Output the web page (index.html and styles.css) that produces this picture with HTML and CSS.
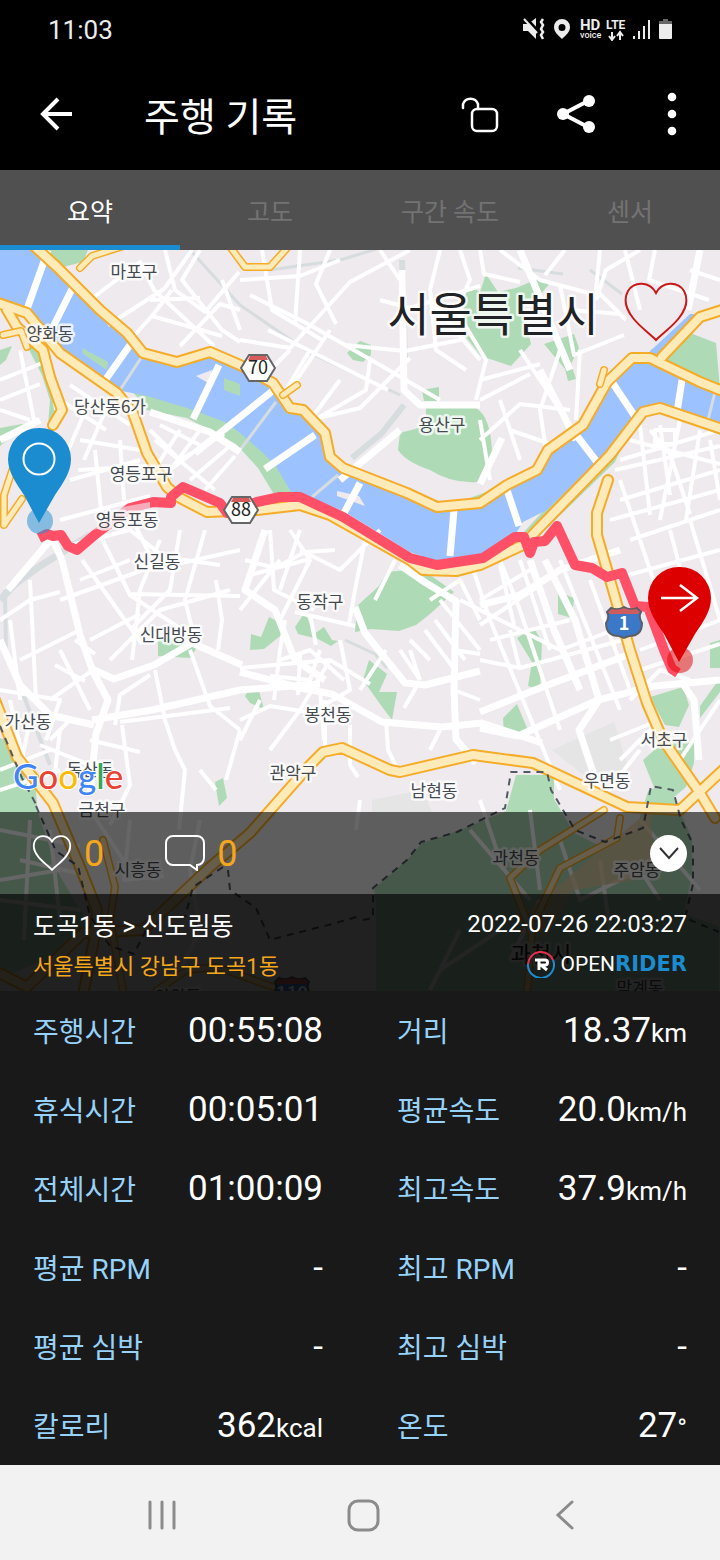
FILE: index.html
```html
<!DOCTYPE html>
<html lang="ko">
<head>
  <meta charset="UTF-8">
  <meta name="viewport" content="width=device-width, initial-scale=1.0">
  <title>주행 기록</title>
  <link rel="stylesheet" href="styles.css">
</head>
<body>
  <div class="status-bar">
    <span class="clock">11:03</span>
    <svg class="status-icons" width="152" height="24" viewBox="522 17 152 24" aria-hidden="true">
      <g fill="#ececec">
        <path d="M523 24h5l8-6v21l-8-8h-5z"/>
        <path d="M562 19a8 8 0 0 0-8 8c0 5 4 8 8 12c4-4 8-7 8-12a8 8 0 0 0-8-8zm0 5a3 3 0 1 1 0 7a3 3 0 0 1 0-7z"/>
        <path d="M633 36h2v3h-2zM638 31h2v8h-2zM643 26h2v13h-2zM648 20h2v19h-2z"/>
        <path d="M659 24h13v14a1 1 0 0 1-1 1h-11a1 1 0 0 1-1-1z"/>
      </g>
      <path d="M663 19h5v2h4v3h-13v-3h4z" fill="#666"/>
      <path d="M526 18l12 13" stroke="#000" stroke-width="3"/>
      <path d="M524 19l13 14" stroke="#ececec" stroke-width="2"/>
      <path d="M543 19l-2 3l2 3l-2 4l2 3l-2 3l2 4" fill="none" stroke="#ececec" stroke-width="2.5"/>
      <path d="M612 32v8m-3-4l3 4l3-4M620 40v-8m-3 4l3-4l3 4" fill="none" stroke="#ececec" stroke-width="2"/>
      <text x="580" y="30" class="st-big">HD</text>
      <text x="580" y="38" class="st-small">voice</text>
      <text x="606" y="29" class="st-lte">LTE</text>
    </svg>
  </div>

  <header class="app-bar">
    <button class="back" aria-label="뒤로">
      <svg width="34" height="34" viewBox="0 0 34 34" fill="none" stroke="#fff" stroke-width="4"><path d="M33 17H4M19 2L4 17l15 15"/></svg>
    </button>
    <h1>주행 기록</h1>
    <button class="tool" aria-label="잠금">
      <svg width="38" height="40" viewBox="461 95 38 40" fill="none" stroke="#fff" stroke-width="2.5"><path d="M463 109v-4a8 8 0 0 1 15 0v5" stroke-linecap="round"/><rect x="472" y="110" width="25" height="22" rx="5"/></svg>
    </button>
    <button class="tool" aria-label="공유">
      <svg width="40" height="40" viewBox="556 94 40 40" fill="#fff"><path d="M588 101l-25 13l25 13" fill="none" stroke="#fff" stroke-width="4"/><circle cx="589" cy="101" r="6"/><circle cx="563" cy="114" r="6"/><circle cx="589" cy="127" r="6"/></svg>
    </button>
    <button class="tool" aria-label="더보기">
      <svg width="10" height="44" viewBox="0 0 10 44" fill="#fff"><circle cx="5" cy="5" r="4.3"/><circle cx="5" cy="22" r="4.3"/><circle cx="5" cy="39" r="4.3"/></svg>
    </button>
  </header>

  <nav class="tabs" role="tablist">
    <button class="tab active" role="tab" aria-selected="true">요약</button>
    <button class="tab" role="tab">고도</button>
    <button class="tab" role="tab">구간 속도</button>
    <button class="tab" role="tab">센서</button>
  </nav>

  <section class="map">
    <svg class="map-canvas" viewBox="0 250 720 741" preserveAspectRatio="xMidYMid slice">
      <rect x="0" y="250" width="720" height="741" fill="#eeeaee"/>

      <!-- plain areas and rail -->
      <path fill="#e4e5e4" d="M552 750l62-28l16 52l-30 14zM372 800l50-10l10 22h-60z"/>
      <g class="rail">
        <path d="M0 600L14 585L40 566L90 535" stroke-width="7"/>
        <path d="M5 590L6 655M14 670l36 95" stroke-width="4"/>
        <path d="M190 250l50 55l70 48l90 42"/>
        <path d="M352 458l30-25l22-28M402 260l3 100" stroke-width="6"/>
        <path d="M270 270l70-10l40-12M590 270l32 24M518 268l45 6M345 640l30 14l12 14"/>
      </g>

      <!-- parks -->
      <g class="park">
        <path d="M18 250h70l-5 12l-24 6l-18-14z"/>
        <path d="M0 350l12-4l-6 14l-6 5zM0 428l22-4l12 6l-20 4l-14 12z"/>
        <path d="M347 353l13-12l11 4v10l-8 7l-10-2zM422 390l17-3v14h-15z"/>
        <path d="M400 433l26-7v-18q22-3 50 0q14 8 16 42q-2 26-14 32q-26 2-48-12q-24-8-32-20z"/>
        <path d="M463 292l8-5l9 5l6-18l12 18l18-4l12-5l10-4l12 4l-11 13l-18 8l10 40l-20 22l-30-10l-16-20z"/>
        <path d="M544 344l18-6l12-4l5 14l-8 16l5 15l-8 2l-3-12z"/>
        <path d="M357 606l22-20l8-14l32-3l14 8l21 15l-24 22l-14 11l-17 6l-28-2l-16 3z"/>
        <path d="M250 650l1-16l10 3l8-20l8 4l7 12l-20 16zM295 627l10-15l9 22l10-7l8 13l6 1l-7 5l-13-7l-20-5z"/>
        <path d="M245 696l4-6l10 1l5 18l-14-6zM363 680l6-20l18 14l-8 18l18 0l-5 28l-12-16z"/>
        <path d="M158 642l2-6l14 3l24 7l-8 12l-32-2zM215 782l8-4l4 20l-8 8z"/>
        <path d="M558 592l16 6l-2 20l-14-4zM517 638l17-10l8 14l-2 48l-12-4l4-24zM503 718l14-14l10 24l-5 7h-18z"/>
        <path d="M650 697l33-10l6 18l-10 22l-14-2zM700 718l20-26v-14l-20 28zM643 760l23-20l28 3v20l-8 24l-24 20zM710 643l10-3v28h-10z"/>
        <path d="M650 350l40-17l26 10l4 46l-30-12z"/>
        <path d="M0 738l14 5l20 30l4 40l20 60l30 50l-26 30l-62 25z"/>
        <path d="M376 991v-90l-2-12l34-30l14-16l36-12l48-20l10-36h38v24l20 34l28 14l34-16l12-40l20-10l12 30l12 28v35l-8 40l35 12v74z"/>
        <path d="M655 800l25 10l8 36l-34 14z"/>
      </g>

      <!-- river and its banks -->
      <path class="park" d="M133 392L190 402L245 425L275 460L300 500L275 496L258 468L236 444L187 418L147 410zM523 533L547 507L593 458L640 405L615 462L545 530zM25 330L45 360L53 400L56 420L48 426L50 400L42 375L24 340zM430 505L470 498L505 485L507 492L475 512L440 514z"/>
      <path class="water" d="M0 250H33L57 267L100 310L127 333L143 353L177 362L210 352L240 365L273 383L290 408L303 410L325 433L330 457L343 468L407 493L437 507L480 503L507 485L537 470L548 450L583 425L607 382L632 358L650 358L700 382L720 390V430L660 408L643 412L600 458L547 510L523 522L515 535L483 555L437 562L410 552L345 512L300 493L291 492L275 465L262 452L240 433L225 422L187 408L147 396L117 390L60 350L27 310L0 302z"/>
      <path class="water" d="M645 356L690 314L702 314L665 360z"/>
      <path class="park" d="M82 348l26 14l-1 8l-24-16zM224 378l16 6v12l-16-6z"/>
      <path fill="#eeeaee" d="M196 376l16-6l-2 14zM337 491l22 5l6 10l-28-10z"/>
      <path class="rail" d="M141 358L120 390M276 402L240 450M338 475L312 497M715 392L708 420"/>

      <!-- streets -->
      <g class="street wide">
        <path d="M48 250l-22 62M74 285l-21 42M130 345l-24 34M219 365l-26 54M280 385l-50 40l-35 28M315 435l-50 34M360 483l-17 32M454 510l-4 46M612 382l24 36M577 436l20 26M507 490l12 36M682 380l-5 32M700 250l-12 60"/>
        <path d="M62 560l18 75l12 34l22 10l40-14l38-22l50 22M62 560l-10-22l-44 52M92 670l16 30l-12 34l-6 60M92 720l60-10l88-20l80-6"/>
        <path d="M0 640l20 45l30 30l44 10M240 672l60 16l32 6l50 28l60 5l40-4l60 20M400 565l26 18l30 18l-2 90l2 48l20 24"/>
        <path d="M355 607l10 26l40 50l20 2l55-14M520 250l50 120M402 270l2 120l16 15l60 0M400 430l-60 50M265 530l-20 60l30 20l20 50l30 20"/>
        <path d="M480 605l40-10l40-25l60-20M480 712l60-24l90-34M480 728l38 8l80-36l56-14l66-6M530 560l24 70l26 60M545 560l30 60l24 80l-20 30l20 60"/>
        <path d="M540 370l26 50l10 20M480 484l22-46M0 440l40-20M150 412l60 20l30 20M680 680l14 20l5 60"/>
      </g>
      <g class="street">
        <!-- north west -->
        <path d="M90 300l50-38l14 28l60 56M108 325l56-36l28-39M130 340l22-24l70 20M165 250l10 40l30 22l34-40M152 316l20-26M180 346l40-42l20 6M200 250l-18 30l40 50l18 12M150 300l50-2M222 280l18 50"/>
        <path d="M250 295l60 30l70 40l60 35M240 340l50 8l60-66l60-32M262 250l10 60l50 30M300 250l-5 74M330 250l-14 34l20 40M240 280l60-4l40-16M268 330l80 40l40 20M290 350l-30 30M330 330l-40 60M310 350l-30 50M340 380l-30 40l50-12l50-50M370 360l-4 30l-48 28M345 345l60 6l60-12M380 300l30 8l70-22"/>
        <path d="M380 250l20 30M440 250l-10 40l6 60l30 20M460 250l10 30l-14 30l30 50l-10 40M430 300l50 60M480 250l4 24l36 8M500 250l40 30l60 16M545 275l20-25M560 285l14 70l50-20M600 250l-4 40l30 30M625 250l15 60M640 250l-34 20l-10 30M655 250l-6 30l60 20M570 310l50 4M690 270l30 10"/>
        <!-- west -->
        <path d="M0 380l50-20l6 50M0 400l40-16M20 350l14 70M0 410l30 10M70 385l60 40M60 400l46 30M80 440l60 10M90 400l-26 60M110 400l-26 60M78 470l70-4M95 450l6 60M120 440l4 60M150 430l30 30l44-26M160 425l40 20M155 440l60 50M180 430l-26 40M200 430l-34 46M170 470l40-30M190 480l40-34M205 490l30-34M70 480l70-20M60 520l90-24"/>
        <path d="M70 545l60-15l50 40M100 535l30 60l60 40M130 515l20 40l70 10M160 540l-20 50l-8 70M180 530l-10 60l-40 40M205 530l-20 70l10 40M150 570l90-20M80 580l50-20M60 600l100-36M82 560l60 84M130 594l110 2M0 620l30-20l30-8M30 580l6 120M10 620l10 80M20 660l60-30M50 700l40-28M90 640l50-26M110 660l50-50l70-20M60 650l30 60M75 640l20 14M55 665l30 16M0 690l60 10l-14 40M216 580l6 40l-4 30M190 650l20 56l30 24"/>
        <path d="M115 725l5-30l30-20M120 722l110-14M155 670l10 50l10 30l10 20l-6 60M122 725l8 60l-20 40M90 740l50 12M40 745l60 24M30 720l-10 50M60 730l-6 50M0 770l50-20M0 790l60-20M200 770l16 20M240 730l-14 50M50 740l20-20M10 700l20 90"/>
        <!-- south -->
        <path d="M245 560l30 8l30-16l30-2M270 530l4 60l40 20M290 530l20 30l-20 40l-10 20M300 530l-20 60M240 610l40-50M250 575l60-16M300 550l40 20l40-40M365 540l-10 50l-6 34M395 560l-20 40M295 612l60 14M310 615l6 30M285 620l-5 30l-6 50M280 660l30-10l34 30M300 655l-2 40M320 650l-10 30l-40-4M340 640l10 50l-24 14M330 660l-30 50l-30 40M240 668l90-8l40 24M260 700l-20 40M240 720l30-14l50 8M360 690l26-40M320 690l4 50M350 725v40l8 12M386 720l2 30l10 20M325 700l0 50"/>
        <path d="M400 650l20 30M420 680l-10-30M425 630l30 40M410 640l20 20M435 620l30 40M418 684l-14 24M440 600l40 50M454 650l26 4M454 690l26 10M430 600l30-20l20 40M460 600l100 50M470 560l20 60l70 170M500 560l20 50l40 120M440 730l-10 20"/>
        <!-- south east -->
        <path d="M500 565l14 60M520 560l30 90M480 600l50-30M480 625l60-40M490 640l80-20M480 660l40 8l110-30M510 630l10 40M560 560l60 150M590 580l40 110M610 580l110-30M640 540l20 60M670 530l16 60M690 520l30 100M560 650l70-26M640 650l80-30M640 670l80-26M630 700l30-30l30 10M620 760l40-40M610 740l50-20M600 800l40-50M680 760l40-60"/>
        <!-- east -->
        <path d="M480 380l60-16M480 400l50-26M500 400l20 60M480 440l40-36l50 6M510 430l40 14M480 420l10 60M560 350l-20 60l6 40M520 350l40 60M580 350l-4 70M620 460l100-30M615 470l105-24M630 440l90 24M640 425l10 90M660 425l10 70M680 420l-20 100M700 430l-14 90M710 440l10 60M620 500l100-30M610 520l110-30M620 480l20 60M650 430l20 24l20 60M655 430h20v14h-20zM630 540l90-30"/>
        <path d="M0 830l80 16M20 860l70 16M0 880l60-10M30 820l-6 120M50 830l10 90M0 900l80 10M90 810l40 60M130 820l-6 60l40-4M200 820l-10 50l10 60l-20 40M360 800l-4 30M480 800l20 60M470 830l60 70M530 810l10 80M560 840l20 60l60-30l20 30M640 820l60 70M600 860l10 70M540 900l-30 60M460 930l-30 60M500 930l-60 40"/>
      </g>

      <path fill="#e9cfa4" opacity=".8" d="M650 810l4 50l-20 20l-60 10l-30 50l-15-30l60-50z"/>

      <!-- highways: casing, then fill -->
      <g class="casing">
        <path id="hw1" d="M33 245L57 267L100 310L127 333L143 353L177 362L210 352L240 365L273 383L290 408L303 410L325 433L330 457L343 468L407 493L437 507L480 503L507 485L537 470L548 450L583 425L607 382L632 358L650 358L700 382L725 392"/>
        <path id="hw2" d="M-5 302L27 313L60 353L117 393L133 413L147 453L167 487L180 498L207 512L257 510L300 505L330 515L410 560L423 570L457 571L480 565L523 545L540 527L610 455L643 412L660 408L725 430"/>
        <path id="hw3" d="M662 357L700 317L725 309"/>
        <path id="hw4" d="M608 480L597 513L597 535L613 590L630 650L647 703L663 740L700 793L715 818"/>
        <path id="hw5" d="M-5 971L27 987L83 933L143 930L210 867L250 833L310 765L323 752L342 748L390 770L400 772L473 755L533 763L627 807L680 810L725 768"/>
        <path id="hw6" d="M-5 700L17 757L53 803L80 867L97 910L95 935L83 995"/>
        <path id="hw7" d="M7 310L17 327L43 350L50 377L62 410L53 425"/>
      </g>
      <g class="fill">
        <use href="#hw1"/><use href="#hw2"/><use href="#hw3"/><use href="#hw4"/><use href="#hw5"/><use href="#hw6"/><use href="#hw7"/>
      </g>
      <g class="casing slim">
        <path id="r1" d="M80 268l12-12l38-12M225 240l20 27h25l18-20M600 384l4-14M283 395l14-10M14 465l-10 30v30l18-26M3 335l18-4l6 16"/>
        <path id="r2" d="M103 840L115 887L110 920L123 990M157 990L187 970L217 967L273 987"/>
        <path id="r3" d="M540 850l64-40M620 818l-3 20l-57 30l-24 50M540 850l-30 28l22 56l-5 60"/>
      </g>
      <g class="fill slim">
        <use href="#r1"/><use href="#r2"/><use href="#r3"/>
      </g>

      <path class="border-line" d="M0 726l22 52l16 30M36 806l20 45l22 15l12 50l20 30l24 8l12-24M223 867l-30 20l-8 30M228 870l2 20l26 18l14 32l22-6l40-10l28-8M363 920l10-2v-30l34-28l14-18l36-10l48-24l6-36h36l4 18l24 40l30 12l38-14l8-42l22 4l8 30l12 24v40l-8 34l34 14"/>

      <!-- recorded route -->
      <path class="route" d="M39 538L47 534L53 536L61 535L68 546L77 550L97 533L130 508L153 502L171 503L171 497L183 487L220 503L227 513L257 502L280 497L300 497L343 517L410 558L437 565L483 558L515 537L524 537L530 553L534 542L545 541L557 526L575 565L592 568L607 577L622 573L635 606L648 607L664 650L672 669L678 673"/>
      <path d="M86 532L96 512L150 502V528H100z" fill="#eeeaee" opacity=".6"/>

      <!-- road signs -->
      <g id="hex">
        <path d="M249 355h18l8 13l-8 13h-18l-8-13z" fill="#fff" stroke="#666" stroke-width="2"/>
        <path d="M250 356h16l2 4h-20z" fill="#d75b5b"/>
      </g>
      <use href="#hex" x="-17" y="142"/>
      <text class="sign" x="258" y="374">70</text>
      <text class="sign" x="241" y="516">88</text>
      <g id="shield">
        <path d="M607 612l4-4q7 3 13-1q6 4 13 1l4 4q-3 5 1 11q0 13-13 13l-5 2l-5-2q-13 0-13-13q4-6 1-11z" fill="#3c78c8" stroke="#5a5e66" stroke-width="2"/>
        <path d="M608 612l4-3q6 2 12-1q6 3 12 1l4 3l-2 2h-28z" fill="#cf5c5c"/>
      </g>
      <text class="shield-no" x="624" y="630">1</text>
      <use href="#shield" x="-332" y="370"/>
      <text class="shield-no" x="292" y="1000">110</text>

      <!-- place names -->
      <g class="place">
        <text x="134" y="278">마포구</text>
        <text x="50" y="340">양화동</text>
        <text x="110" y="413">당산동6가</text>
        <text x="141" y="480">영등포구</text>
        <text x="127" y="526">영등포동</text>
        <text x="157" y="568">신길동</text>
        <text x="171" y="641">신대방동</text>
        <text x="320" y="608">동작구</text>
        <text x="442" y="431">용산구</text>
        <text x="328" y="721">봉천동</text>
        <text x="293" y="779">관악구</text>
        <text x="434" y="797">남현동</text>
        <text x="607" y="787">우면동</text>
        <text x="664" y="746">서초구</text>
        <text x="28" y="728">가산동</text>
        <text x="90" y="776">독산동</text>
        <text x="102" y="816">금천구</text>
        <text x="138" y="876">시흥동</text>
        <text x="516" y="864">과천동</text>
        <text x="637" y="876">주암동</text>
        <text x="178" y="1003">안양동</text>
        <text x="640" y="994">막계동</text>
      </g>
      <text class="county" x="541" y="962">과천시</text>
      <text class="city" x="493" y="331">서울특별시</text>

      <!-- end / start pins -->
      <circle cx="40" cy="521" r="13" fill="#1c8cd1" opacity=".5"/>
      <path d="M39 428a31 31 0 0 0-31 31c0 13 8 24 16 36l15 28l16-28c8-12 16-23 16-36a31 31 0 0 0-32-31z" fill="#1c8cd1"/>
      <circle cx="39" cy="459" r="15.5" fill="none" stroke="#fff" stroke-width="2"/>
      <circle cx="680" cy="660" r="13" fill="#dd0000" opacity=".5"/>
      <path d="M679 567a31 31 0 0 0-31 31c0 13 8 24 16 36l15 28l16-28c8-12 16-23 16-36a31 31 0 0 0-32-31z" fill="#dc0000"/>
      <path d="M661 598h36M680 585l17 13l-17 13" fill="none" stroke="#fff" stroke-width="2.5"/>

      <text class="google" x="13" y="789"><tspan fill="#4285f4">G</tspan><tspan fill="#ea4335">o</tspan><tspan fill="#fbbc05">o</tspan><tspan fill="#4285f4">g</tspan><tspan fill="#34a853">l</tspan><tspan fill="#ea4335">e</tspan></text>
    </svg>

    <button class="favorite" aria-label="즐겨찾기">
      <svg width="64" height="60" viewBox="0 0 64 60" fill="none" stroke="#c81a1a" stroke-width="2"><path d="M32 11C26-1 10-1 4 9C-1 18 2 27 9 36C15 44 25 51 32 58C39 51 49 44 55 36C62 27 65 18 60 9C54-1 38-1 32 11z"/></svg>
    </button>

    <div class="actions">
      <button class="count">
        <svg width="40" height="36" viewBox="0 0 64 60" fill="none" stroke="#fff" stroke-width="3"><path d="M32 11C26-1 10-1 4 9C-1 18 2 27 9 36C15 44 25 51 32 58C39 51 49 44 55 36C62 27 65 18 60 9C54-1 38-1 32 11z"/></svg>
        <span>0</span>
      </button>
      <button class="count">
        <svg width="40" height="36" viewBox="0 0 40 36" fill="none" stroke="#fff" stroke-width="2"><path d="M8 1h24a7 7 0 0 1 7 7v15a7 7 0 0 1-7 7v5l-7-5H8a7 7 0 0 1-7-7V8a7 7 0 0 1 7-7z"/></svg>
        <span>0</span>
      </button>
      <button class="collapse" aria-label="접기">
        <svg width="20" height="14" viewBox="0 0 20 14" fill="none" stroke="#333" stroke-width="2"><path d="M1 2l9 10l9-10"/></svg>
      </button>
    </div>

    <div class="ride">
      <div class="ride-row">
        <h2>도곡1동 &gt; 신도림동</h2>
        <time datetime="2022-07-26T22:03:27">2022-07-26 22:03:27</time>
      </div>
      <div class="ride-row">
        <p class="address">서울특별시 강남구 도곡1동</p>
        <div class="brand">
          <svg width="28" height="28" viewBox="0 0 28 28" fill="none" stroke-width="2">
            <path d="M1 14a13 13 0 0 1 25-4" stroke="#e8304f"/>
            <path d="M26 10a13 13 0 1 1-25 4" stroke="#1c8cd1"/>
            <path d="M8 10h10a2 2 0 0 1 0 5h-4l6 5M12 10v10" stroke="#fff" stroke-width="3"/>
          </svg>
          <span>OPEN<b>RIDER</b></span>
        </div>
      </div>
    </div>
  </section>

  <dl class="stats">
    <div class="stat"><dt>주행시간</dt><dd>00:55:08</dd></div>
    <div class="stat"><dt>거리</dt><dd>18.37<small>km</small></dd></div>
    <div class="stat"><dt>휴식시간</dt><dd>00:05:01</dd></div>
    <div class="stat"><dt>평균속도</dt><dd>20.0<small>km/h</small></dd></div>
    <div class="stat"><dt>전체시간</dt><dd>01:00:09</dd></div>
    <div class="stat"><dt>최고속도</dt><dd>37.9<small>km/h</small></dd></div>
    <div class="stat"><dt>평균 RPM</dt><dd>-</dd></div>
    <div class="stat"><dt>최고 RPM</dt><dd>-</dd></div>
    <div class="stat"><dt>평균 심박</dt><dd>-</dd></div>
    <div class="stat"><dt>최고 심박</dt><dd>-</dd></div>
    <div class="stat"><dt>칼로리</dt><dd>362<small>kcal</small></dd></div>
    <div class="stat"><dt>온도</dt><dd>27<small>°</small></dd></div>
  </dl>

  <div class="nav-bar">
    <button aria-label="최근 앱">
      <svg width="30" height="32" viewBox="0 0 30 32" stroke="#8b8b8b" stroke-width="3" stroke-linecap="round"><path d="M3 3v26M15 3v26M27 3v26"/></svg>
    </button>
    <button aria-label="홈">
      <svg width="34" height="34" viewBox="0 0 34 34" fill="none" stroke="#8b8b8b" stroke-width="3"><rect x="3" y="3" width="29" height="29" rx="9"/></svg>
    </button>
    <button aria-label="뒤로 가기">
      <svg width="20" height="32" viewBox="0 0 20 32" fill="none" stroke="#8b8b8b" stroke-width="3" stroke-linecap="round"><path d="M18 3L4 16l14 13"/></svg>
    </button>
  </div>
</body>
</html>
```
FILE: styles.css
```css
* {
  box-sizing: border-box;
}

body {
  margin: 0;
  background: #191919;
  color: #fff;
  font-family: Roboto, "Noto Sans CJK KR", sans-serif;
}

button {
  display: flex;
  align-items: center;
  justify-content: center;
  margin: 0;
  padding: 0;
  border: none;
  background: none;
  color: inherit;
  font: inherit;
  cursor: pointer;
}

h1, h2, p, dl, dd {
  margin: 0;
  font-weight: 400;
}

/* Status bar */
.status-bar {
  display: flex;
  align-items: center;
  justify-content: space-between;
  height: 58px;
  padding: 0 46px 0 48px;
  background: #000;
}

.clock {
  padding-top: 2px;
  font-size: 26px;
  line-height: 60px;
  color: #ececec;
}

.status-icons text {
  fill: #ececec;
  font-weight: 700;
}

.status-icons .st-big {
  font-size: 15px;
}

.status-icons .st-small {
  font-size: 9px;
  font-weight: 500;
}

.status-icons .st-lte {
  font-size: 12px;
}

/* App bar */
.app-bar {
  display: flex;
  align-items: center;
  height: 112px;
  background: #000;
}

.app-bar h1 {
  flex: 1;
  margin-left: 32px;
  padding-top: 8px;
  font-size: 39px;
  line-height: 56px;
}

.back {
  width: 112px;
  height: 112px;
}

.tool {
  width: 96px;
  height: 112px;
}

/* Tabs */
.tabs {
  display: grid;
  grid-template-columns: repeat(4, 1fr);
  height: 80px;
  background: #505050;
}

.tab {
  border-top: 5px solid transparent;
  border-bottom: 5px solid transparent;
  font-size: 25px;
  color: #737373;
}

.tab.active {
  border-bottom-color: #1c8cd1;
  color: #fff;
}

/* Map */
.map {
  position: relative;
  display: flex;
  flex-direction: column;
  justify-content: flex-end;
  aspect-ratio: 720 / 741;
  overflow: hidden;
}

.map-canvas {
  position: absolute;
  inset: 0;
  width: 100%;
  height: 100%;
  font-family: "Noto Sans CJK KR", sans-serif;
}

.park {
  fill: #aedbb6;
}

.water {
  fill: #9cc2ff;
}

.rail, .street, .casing, .fill, .route, .border-line {
  fill: none;
  stroke-linejoin: round;
}

.rail {
  stroke: #d7dcdf;
  stroke-width: 3;
}

.street {
  stroke: #fff;
  stroke-width: 4;
}

.street.wide {
  stroke-width: 7;
}

.casing {
  stroke: #f5ac28;
  stroke-width: 12;
  stroke-linecap: round;
}

.fill {
  stroke: #ffebb9;
  stroke-width: 8;
  stroke-linecap: round;
}

.casing.slim {
  stroke-width: 8;
}

.fill.slim {
  stroke-width: 5;
}

.border-line {
  stroke: #525a64;
  stroke-width: 2;
  stroke-dasharray: 7 6;
}

.route {
  stroke: #ff5068;
  stroke-width: 10;
}

.sign, .shield-no {
  text-anchor: middle;
  font-size: 18px;
  fill: #222;
}

.shield-no {
  fill: #fff;
  font-weight: 700;
}

.place, .county, .city {
  text-anchor: middle;
  fill: #454a50;
  stroke: rgba(255, 255, 255, 0.8);
  stroke-width: 5px;
  stroke-linejoin: round;
  paint-order: stroke;
  font-size: 17px;
}

.county {
  font-size: 22px;
  fill: #222;
}

.city {
  font-size: 46px;
  fill: #202225;
}

.google {
  font-family: Lato, sans-serif;
  font-size: 35px;
  font-weight: 500;
  stroke: #fff;
  stroke-width: 2px;
  paint-order: stroke;
}

.favorite {
  position: absolute;
  top: 32px;
  right: 32px;
}

/* Bars over the map */
.actions {
  position: relative;
  display: flex;
  align-items: center;
  gap: 61px;
  height: 82px;
  padding: 0 33px 0 32px;
  background: rgba(0, 0, 0, 0.6);
}

.count {
  gap: 12px;
  font-size: 36px;
  color: #f5a71c;
}

.count span {
  padding-top: 2px;
}

.collapse {
  width: 37px;
  height: 37px;
  margin-left: auto;
  border-radius: 50%;
  background: #fff;
}

.ride {
  position: relative;
  padding: 10px 33px 7px;
  background: rgba(0, 0, 0, 0.86);
}

.ride-row {
  display: flex;
  align-items: center;
  justify-content: space-between;
  height: 40px;
}

.ride h2 {
  font-size: 25px;
}

.ride time {
  font-size: 24px;
}

.address {
  font-size: 22px;
  color: #f5a71c;
}

.brand {
  display: flex;
  align-items: center;
  gap: 5px;
  font-size: 21px;
}

.brand b {
  color: #1c8cd1;
  font-family: "DejaVu Sans", sans-serif;
  font-size: 21px;
}

/* Stats */
.stats {
  display: grid;
  grid-template-columns: 1fr 1fr;
  column-gap: 74px;
  padding: 0 33px;
}

.stat {
  display: flex;
  align-items: baseline;
  justify-content: space-between;
  height: 79px;
  line-height: 79px;
}

.stat dt {
  font-size: 28px;
  color: #96d2fa;
}

.stat dd {
  font-size: 35px;
}

.stat small {
  font-size: 26px;
}

/* System navigation */
.nav-bar {
  display: grid;
  grid-template-columns: repeat(3, 1fr);
  height: 95px;
  padding: 4px 56px 0 62px;
  background: #f2f2f2;
}
```
